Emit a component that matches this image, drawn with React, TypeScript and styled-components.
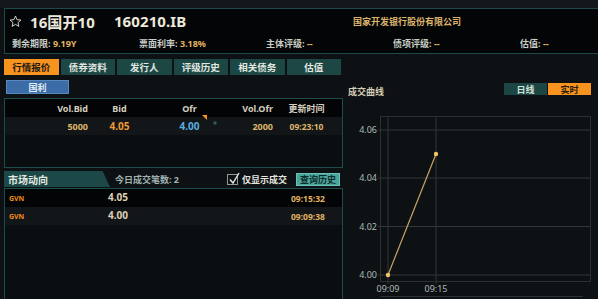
import React from 'react'
import styled, { createGlobalStyle } from 'styled-components'

const GlobalStyle = createGlobalStyle`
  html, body {
    margin: 0;
    padding: 0;
    background: #0e1113;
  }
  body {
    font-family: "Noto Sans", "Noto Sans CJK SC", sans-serif;
  }
`

const Page = styled.div`
  width: 598px;
  height: 299px;
  overflow: hidden;
  background: #0e1113;
  display: flex;
  flex-direction: column;
`

const TopStrip = styled.div`
  height: 8px;
  flex-shrink: 0;
  background: #15181b;
`

const Header = styled.div`
  margin-left: 4px;
  height: 46px;
  flex-shrink: 0;
  box-sizing: border-box;
  border: 1px solid #1c4a4a;
  border-right: none;
  background: #030506;
  padding: 2px 0 0 4px;
`

const TitleRow = styled.div`
  display: flex;
  align-items: center;
  height: 20px;
`

const TitleGroup = styled.div`
  width: 344px;
  display: flex;
  align-items: center;
`

const Name = styled.span`
  margin-left: 8px;
  font-size: 15px;
  font-weight: 700;
  color: #ece8dc;
  letter-spacing: 0.1px;
`

const Code = styled(Name)`
  margin-left: 19px;
`

const Company = styled.span`
  font-size: 9px;
  font-weight: 700;
  color: #dcb46e;
`

const InfoRow = styled.div`
  display: grid;
  grid-template-columns: repeat(5, 127px);
  margin-top: 6px;
  padding-left: 3px;
  height: 12px;
  align-items: center;
`

const InfoItem = styled.span`
  font-size: 9px;
  font-weight: 700;
  color: #c8cec6;
  white-space: nowrap;
`

const InfoValue = styled.span`
  color: #e2b462;
`

const Body = styled.div`
  flex: 1;
  display: flex;
  min-height: 0;
`

const LeftCol = styled.div`
  margin-left: 4px;
  width: 339px;
  display: flex;
  flex-direction: column;
`

const Tabs = styled.div`
  margin-top: 5px;
  width: 337px;
  display: grid;
  grid-template-columns: repeat(6, 1fr);
  gap: 2px;
`

const Tab = styled.div<{ $active?: boolean }>`
  height: 16px;
  display: flex;
  align-items: center;
  justify-content: center;
  font-size: 9.5px;
  font-weight: 700;
  background: ${(p) => (p.$active ? '#f7931e' : '#1c4745')};
  color: ${(p) => (p.$active ? '#1e1a14' : '#e2e8e0')};
`

const SubBar = styled.div`
  margin-top: 5px;
  padding-left: 2px;
  height: 14px;
  display: flex;
`

const MarketButton = styled.div`
  width: 63px;
  box-sizing: border-box;
  border: 1px solid #5a88bd;
  background: #3b6ca8;
  color: #e4ecf4;
  font-size: 9px;
  font-weight: 700;
  display: flex;
  align-items: center;
  justify-content: center;
`

const QuoteBox = styled.div`
  margin-top: 4px;
  height: 70px;
  box-sizing: border-box;
  border: 1px solid #1c4d4d;
  background: #0b0e10;
`

const QuoteGrid = styled.div<{ $bg: string; $height: number }>`
  display: grid;
  grid-template-columns: 83px 63px 77px 45px 67px;
  height: ${(p) => p.$height}px;
  align-items: center;
  background: ${(p) => p.$bg};
`

const Cell = styled.span<{ $align?: string; $color?: string; $size?: number }>`
  text-align: ${(p) => p.$align || 'center'};
  color: ${(p) => p.$color || '#d8d2c2'};
  font-size: ${(p) => p.$size || 9}px;
  font-weight: 700;
  white-space: nowrap;
`

const OfrValue = styled.span`
  position: relative;
  &::after {
    content: '';
    position: absolute;
    right: -8px;
    top: -4px;
    border-top: 5px solid #f7931e;
    border-left: 5px solid transparent;
  }
`

const Dot = styled.span`
  position: absolute;
  right: -17px;
  top: 3px;
  width: 2px;
  height: 2px;
  border-radius: 50%;
  background: #3f6e6a;
  box-shadow: 0 0 1px 1px #26403f;
`

const MarketBar = styled.div`
  margin-top: 3px;
  height: 16px;
  display: flex;
  align-items: center;
  padding-right: 3px;
`

const MarketTab = styled.div`
  width: 106px;
  height: 16px;
  box-sizing: border-box;
  padding-left: 4px;
  background: #1c4848;
  clip-path: polygon(0 0, 93% 0, 100% 100%, 0 100%);
  color: #e2e8e2;
  font-size: 10px;
  font-weight: 700;
  display: flex;
  align-items: center;
`

const CountText = styled.span`
  margin-left: 5px;
  font-size: 9px;
  font-weight: 700;
  color: #9fb2b0;
`

const RightGroup = styled.div`
  margin-left: auto;
  display: flex;
  align-items: center;
`

const CheckBox = styled.span`
  width: 11px;
  height: 11px;
  box-sizing: border-box;
  border: 1px solid #8e9a9a;
  position: relative;
  display: inline-block;
  svg {
    position: absolute;
    left: 0;
    top: -3px;
  }
`

const CheckLabel = styled.span`
  margin-left: 4px;
  font-size: 9px;
  font-weight: 700;
  color: #e6e6e0;
`

const HistoryButton = styled.div`
  margin-left: 9px;
  width: 44px;
  height: 13px;
  box-sizing: border-box;
  border: 1px solid #6cc0b6;
  background: #4aa59c;
  color: #0d2b2a;
  font-size: 9px;
  font-weight: 700;
  display: flex;
  align-items: center;
  justify-content: center;
`

const ListBox = styled.div`
  margin-top: 1px;
  flex: 1;
  box-sizing: border-box;
  border: 1px solid #1c4d4d;
  border-bottom: none;
  background: #0b0e10;
`

const TradeRow = styled.div<{ $bg: string }>`
  display: grid;
  grid-template-columns: 103px 183px 1fr;
  height: 18px;
  align-items: center;
  background: ${(p) => p.$bg};
`

const Broker = styled.span`
  padding-left: 4px;
  font-size: 7px;
  font-weight: 700;
  color: #f08a1c;
`

const TradePrice = styled.span`
  font-size: 10px;
  font-weight: 700;
  color: #ddd0b4;
  margin-top: -3px;
`

const TradeTime = styled.span`
  font-size: 8.5px;
  font-weight: 700;
  color: #e0b062;
`

const RightCol = styled.div`
  flex: 1;
  display: flex;
  flex-direction: column;
`

const ChartHeader = styled.div`
  margin-top: 29px;
  padding: 0 7px 0 5px;
  height: 12px;
  display: flex;
  align-items: center;
`

const ChartTitle = styled.span`
  font-size: 9px;
  font-weight: 700;
  color: #d6ceb8;
  margin-top: 4px;
`

const Toggle = styled.div`
  margin-left: auto;
  display: flex;
  gap: 1px;
`

const ToggleButton = styled.div<{ $active?: boolean }>`
  width: 43px;
  height: 12px;
  display: flex;
  align-items: center;
  justify-content: center;
  font-size: 9px;
  font-weight: 700;
  background: ${(p) => (p.$active ? '#f7931e' : '#1c4644')};
  color: ${(p) => (p.$active ? '#2a1c0c' : '#d6e2dc')};
`

const ChartSvg = styled.svg`
  margin-top: 13px;
  display: block;
  font-family: "Noto Sans", sans-serif;
`

const Star = () => (
  <svg width="13" height="13" viewBox="0 0 24 24">
    <polygon
      points="12,2 14.9,8.6 22,9.3 16.6,14 18.2,21 12,17.3 5.8,21 7.4,14 2,9.3 9.1,8.6"
      fill="none"
      stroke="#d8d8d0"
      strokeWidth="1.8"
      strokeLinejoin="round"
    />
  </svg>
)

const info = [
  ['剩余期限', '9.19Y'],
  ['票面利率', '3.18%'],
  ['主体评级', '--'],
  ['债项评级', '--'],
  ['估值', '--'],
]

const tabs = ['行情报价', '债券资料', '发行人', '评级历史', '相关债务', '估值']

const trades = [
  { price: '4.05', time: '09:15:32', bg: '#030405' },
  { price: '4.00', time: '09:09:38', bg: '#131618' },
]

const yTicks = [
  { label: '4.06', y: 22 },
  { label: '4.04', y: 70 },
  { label: '4.02', y: 118.5 },
  { label: '4.00', y: 167 },
]

const xTicks = [
  { label: '09:09', x: 45 },
  { label: '09:15', x: 93 },
]

const points = [
  { x: 45, y: 167 },
  { x: 93, y: 46 },
]

const Chart = () => (
  <ChartSvg width="255" height="191" viewBox="0 0 255 191">
    <rect x="37.5" y="8.5" width="210" height="165" fill="none" stroke="#2b3033" />
    {yTicks.map((t) => (
      <g key={t.label}>
        <line x1="35" x2="247.5" y1={t.y} y2={t.y} stroke="#30363a" />
        <text x="34" y={t.y + 3} textAnchor="end" fontSize="9" fill="#a9bcbc">
          {t.label}
        </text>
      </g>
    ))}
    {xTicks.map((t) => (
      <g key={t.label}>
        <line x1={t.x} x2={t.x} y1="8.5" y2="176" stroke="#30363a" />
        <text x={t.x} y="184" textAnchor="middle" fontSize="9" fill="#a9bcbc">
          {t.label}
        </text>
      </g>
    ))}
    <line x1="37.5" x2="240" y1="188.5" y2="188.5" stroke="#2b3033" />
    <polyline
      points={points.map((p) => `${p.x},${p.y}`).join(' ')}
      fill="none"
      stroke="#c9a468"
      strokeWidth="1.2"
    />
    {points.map((p) => (
      <circle key={p.x} cx={p.x} cy={p.y} r="2.2" fill="#f2c46a" />
    ))}
  </ChartSvg>
)

export default function App() {
  return (
    <Page>
      <GlobalStyle />
      <TopStrip />
      <Header>
        <TitleRow>
          <TitleGroup>
            <Star />
            <Name>16国开10</Name>
            <Code>160210.IB</Code>
          </TitleGroup>
          <Company>国家开发银行股份有限公司</Company>
        </TitleRow>
        <InfoRow>
          {info.map(([label, value]) => (
            <InfoItem key={label}>
              {label}: <InfoValue>{value}</InfoValue>
            </InfoItem>
          ))}
        </InfoRow>
      </Header>
      <Body>
        <LeftCol>
          <Tabs>
            {tabs.map((t, i) => (
              <Tab key={t} $active={i === 0}>
                {t}
              </Tab>
            ))}
          </Tabs>
          <SubBar>
            <MarketButton>国利</MarketButton>
          </SubBar>
          <QuoteBox>
            <QuoteGrid $bg="#030405" $height={18}>
              <Cell $align="right" $color="#d6d0c0">Vol.Bid</Cell>
              <Cell $color="#d6d0c0">Bid</Cell>
              <Cell $color="#d6d0c0">Ofr</Cell>
              <Cell $align="right" $color="#d6d0c0">Vol.Ofr</Cell>
              <Cell $color="#d6d0c0">更新时间</Cell>
            </QuoteGrid>
            <QuoteGrid $bg="#131618" $height={18}>
              <Cell $align="right" $color="#dcb46a">5000</Cell>
              <Cell $color="#ef9a34" $size={10}>4.05</Cell>
              <Cell $color="#5aaee0" $size={10}>
                <OfrValue>
                  4.00
                  <Dot />
                </OfrValue>
              </Cell>
              <Cell $align="right" $color="#dcb46a">2000</Cell>
              <Cell $color="#dcb46a" $size={8.5}>09:23:10</Cell>
            </QuoteGrid>
          </QuoteBox>
          <MarketBar>
            <MarketTab>市场动向</MarketTab>
            <CountText>今日成交笔数: 2</CountText>
            <RightGroup>
              <CheckBox>
                <svg width="12" height="13" viewBox="0 0 12 13">
                  <path d="M2 7.5 L5 11 L11 1" fill="none" stroke="#e8e8e4" strokeWidth="1.4" />
                </svg>
              </CheckBox>
              <CheckLabel>仅显示成交</CheckLabel>
              <HistoryButton>查询历史</HistoryButton>
            </RightGroup>
          </MarketBar>
          <ListBox>
            {trades.map((t) => (
              <TradeRow key={t.time} $bg={t.bg}>
                <Broker>GVN</Broker>
                <TradePrice>{t.price}</TradePrice>
                <TradeTime>{t.time}</TradeTime>
              </TradeRow>
            ))}
          </ListBox>
        </LeftCol>
        <RightCol>
          <ChartHeader>
            <ChartTitle>成交曲线</ChartTitle>
            <Toggle>
              <ToggleButton>日线</ToggleButton>
              <ToggleButton $active>实时</ToggleButton>
            </Toggle>
          </ChartHeader>
          <Chart />
        </RightCol>
      </Body>
    </Page>
  )
}
